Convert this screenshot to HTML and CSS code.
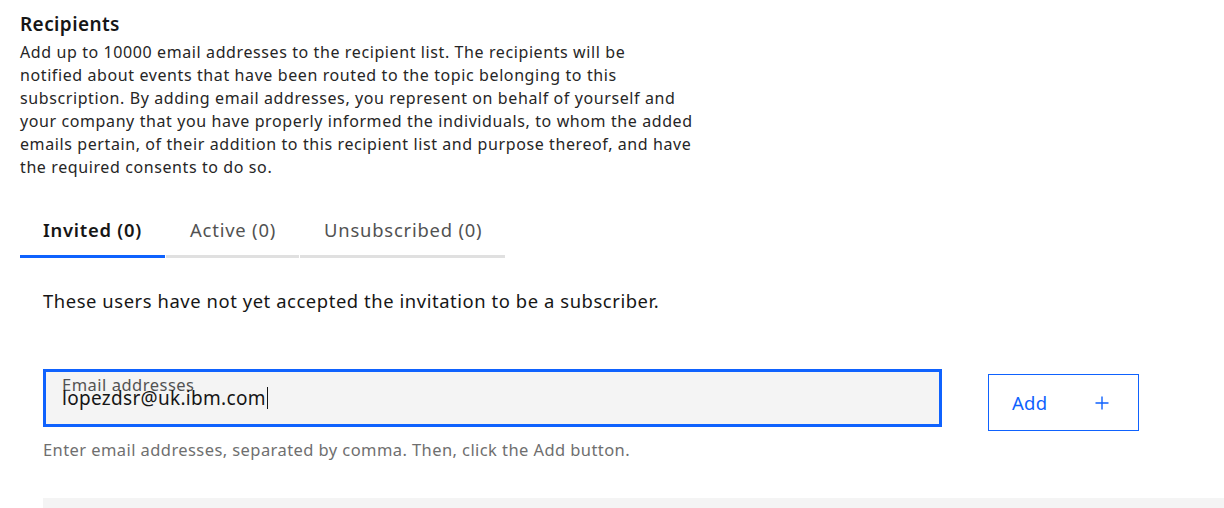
FILE: index.html
```html
<!DOCTYPE html>
<html lang="en">
<head>
<meta charset="utf-8">
<title>Recipients</title>
<link rel="stylesheet" href="styles.css">
</head>
<body>
<section class="recipients">
  <h2 class="heading">Recipients</h2>
  <p class="desc">Add up to 10000 email addresses to the recipient list. The recipients will be<br>notified about events that have been routed to the topic belonging to this<br>subscription. By adding email addresses, you represent on behalf of yourself and<br>your company that you have properly informed the individuals, to whom the added<br>emails pertain, of their addition to this recipient list and purpose thereof, and have<br>the required consents to do so.</p>

  <div class="tabs">
    <div class="tab tab-active">Invited (0)</div>
    <div class="tab">Active (0)</div>
    <div class="tab">Unsubscribed (0)</div>
  </div>

  <div class="panel">
    <p class="panel-text">These users have not yet accepted the invitation to be a subscriber.</p>
    <div class="add-row">
      <div class="field">
        <span class="field-label">Email addresses</span>
        <span class="field-value">lopezdsr@uk.ibm.com<span class="caret"></span></span>
      </div>
      <button class="add-btn" type="button">
        <span>Add</span>
        <svg class="plus" width="14" height="14" viewBox="0 0 14 14" aria-hidden="true"><path d="M7 0.5V13.5M0.5 7H13.5" stroke="#0f62fe" stroke-width="1.4" fill="none"/></svg>
      </button>
    </div>
    <div class="helper">Enter email addresses, separated by comma. Then, click the Add button.</div>
    <div class="table-top"></div>
  </div>
</section>
</body>
</html>
```

FILE: styles.css
```css
html, body {
  margin: 0;
  padding: 0;
  background: #ffffff;
  overflow: hidden;
}

body {
  font-family: "Noto Sans", "Open Sans", sans-serif;
  color: #161616;
  width: 1224px;
  height: 508px;
}

.recipients {
  padding: 12px 0 0 20px;
}

.heading {
  margin: 0;
  font-size: 19px;
  line-height: 24px;
  font-weight: 600;
  letter-spacing: 0.4px;
}

.desc {
  margin: 5px 0 0 0;
  font-size: 16px;
  line-height: 23px;
  letter-spacing: 0.6px;
  color: #262626;
}

.tabs {
  display: flex;
  margin-top: 21px;
}

.tab {
  height: 52px;
  padding: 3px 23px 0 24px;
  box-sizing: content-box;
  display: flex;
  align-items: center;
  font-size: 18.4px;
  letter-spacing: 0.8px;
  color: #525252;
  border-bottom: 3px solid #e0e0e0;
  margin-right: 1px;
  white-space: nowrap;
}

.tab-active {
  padding-left: 23px;
  color: #161616;
  font-weight: 600;
  letter-spacing: 0.75px;
  border-bottom-color: #0f62fe;
}

.panel {
  padding-left: 23px;
}

.panel-text {
  margin: 31px 0 0 0;
  font-size: 18.4px;
  line-height: 24px;
  letter-spacing: 0.57px;
}

.add-row {
  display: flex;
  align-items: flex-start;
  gap: 46px;
  margin-top: 56px;
}

.field {
  position: relative;
  width: 899px;
  height: 58px;
  box-sizing: border-box;
  background: #f4f4f4;
  border: 3px solid #0f62fe;
  padding-left: 16px;
}

.field-label {
  position: absolute;
  left: 16px;
  top: 3px;
  font-size: 16.5px;
  line-height: 20px;
  letter-spacing: 0.5px;
  color: #525252;
}

.field-value {
  position: absolute;
  left: 16px;
  top: 13px;
  font-size: 19px;
  line-height: 26px;
  letter-spacing: 0.3px;
  color: #161616;
  display: flex;
  align-items: center;
}

.caret {
  display: inline-block;
  width: 1px;
  height: 22px;
  background: #161616;
  margin-left: 1px;
}

.add-btn {
  margin-top: 5px;
  width: 151px;
  height: 57px;
  box-sizing: border-box;
  border: 1px solid #0f62fe;
  background: #ffffff;
  color: #0f62fe;
  font-family: inherit;
  font-size: 18.5px;
  letter-spacing: 0.3px;
  padding: 0 29px 0 23px;
  display: flex;
  align-items: center;
  justify-content: space-between;
  cursor: pointer;
}

.helper {
  margin-top: 8px;
  font-size: 16.5px;
  line-height: 22px;
  color: #6f6f6f;
  letter-spacing: 0.42px;
}

.table-top {
  margin-top: 37px;
  height: 20px;
  background: #f4f4f4;
}
```
